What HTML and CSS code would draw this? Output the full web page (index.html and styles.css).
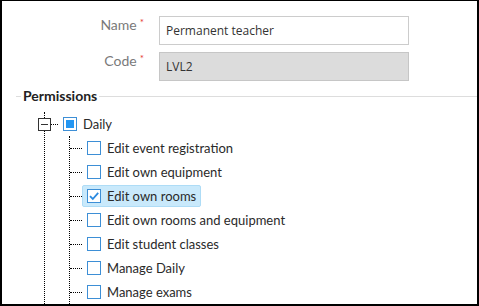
FILE: index.html
```html
<!DOCTYPE html>
<html lang="en">
<head>
    <meta charset="UTF-8">
    <meta name="viewport" content="width=device-width, initial-scale=1.0">
    <title>Edit Level</title>
    <link rel="stylesheet" href="styles.css">
</head>
<body>

<div class="frame">
    <div class="form-row">
        <label for="name">Name<span class="req">*</span></label>
        <input id="name" type="text" value="Permanent teacher">
    </div>
    <div class="form-row">
        <label for="code">Code<span class="req">*</span></label>
        <input id="code" type="text" class="readonly" value="LVL2" readonly>
    </div>

    <fieldset class="permissions">
        <legend>Permissions</legend>

        <ul class="tree">
            <li>
                <div class="row">
                    <span class="expander"></span>
                    <span class="hline root"></span>
                    <span class="item"><span class="check partial"></span>Daily</span>
                </div>
                <ul class="children">
                    <li><div class="row"><span class="hline"></span><span class="item"><span class="check"></span>Edit event registration</span></div></li>
                    <li><div class="row"><span class="hline"></span><span class="item"><span class="check"></span>Edit own equipment</span></div></li>
                    <li><div class="row"><span class="hline"></span><span class="item selected"><span class="check checked">
                        <svg width="12" height="12" viewBox="0 0 12 12"><path d="M2 6.2 L4.8 9 L10.2 2.8" fill="none" stroke="#2b8ae0" stroke-width="1.8"/></svg>
                    </span>Edit own rooms</span></div></li>
                    <li><div class="row"><span class="hline"></span><span class="item"><span class="check"></span>Edit own rooms and equipment</span></div></li>
                    <li><div class="row"><span class="hline"></span><span class="item"><span class="check"></span>Edit student classes</span></div></li>
                    <li><div class="row"><span class="hline"></span><span class="item"><span class="check"></span>Manage Daily</span></div></li>
                    <li><div class="row"><span class="hline"></span><span class="item"><span class="check"></span>Manage exams</span></div></li>
                </ul>
            </li>
        </ul>
    </fieldset>
</div>

</body>
</html>
```

FILE: styles.css
```css
html, body {
    margin: 0;
    padding: 0;
    background-color: #fff;
}
.frame {
    width: 479px;
    height: 306px;
    box-sizing: border-box;
    border-style: solid;
    border-color: #000;
    border-width: 1px 2px 2px 2px;
    padding-top: 15px;
    overflow: hidden;
    font-family: Lato, "Noto Sans", sans-serif;
    font-size: 13px;
    color: #333;
}
.form-row {
    display: flex;
    align-items: flex-start;
    margin-bottom: 7px;
}
.form-row label {
    width: 142px;
    text-align: right;
    color: #7a7a7a;
    font-size: 14px;
    line-height: 16px;
    padding-top: 1px;
}
.req {
    color: #e53935;
    font-size: 10px;
    vertical-align: top;
    margin-left: 3px;
    line-height: 10px;
}
.form-row input {
    margin-left: 15px;
    width: 250px;
    height: 29px;
    box-sizing: border-box;
    border: 1px solid #ccc;
    padding: 0 6px;
    font-family: "Open Sans", sans-serif;
    font-size: 12px;
    color: #333;
    background-color: #fff;
    outline: none;
}
.form-row input.readonly {
    background-color: #dcdcdc;
    border-color: #c6c6c6;
}

/* permissions tree */
.permissions {
    margin: 0 0 0 14px;
    padding: 8px 0 0 5px;
    border: none;
    border-top: 1px solid #ddd;
}
.permissions legend {
    padding: 0 2px;
    font-weight: bold;
    font-size: 14px;
    line-height: 16px;
    color: #222;
}
.tree, .children {
    list-style: none;
    margin: 0;
    padding: 0;
    border-left: 1px dotted #000;
}
.tree {
    margin-left: 23px;
}
.children {
    margin-left: 24px;
}
.row {
    display: flex;
    align-items: center;
    height: 24px;
}
.expander {
    width: 13px;
    height: 13px;
    box-sizing: border-box;
    margin-left: -7px;
    border: 1px solid #333;
    background-color: #fff;
    display: flex;
    align-items: center;
    justify-content: center;
}
.expander::before {
    content: "";
    width: 7px;
    height: 1px;
    background-color: #333;
}
.hline {
    width: 12px;
    height: 0;
    border-top: 1px dotted #000;
    margin-top: 1px;
}
.hline.root {
    width: 7px;
}
.item {
    display: flex;
    align-items: center;
    height: 22px;
    box-sizing: border-box;
    padding: 0 4px;
    border: 1px solid transparent;
    border-radius: 2px;
    color: #2a2a2a;
    white-space: nowrap;
}
.item.selected {
    background-color: #c9e9fb;
    border-color: #aedcf6;
}
.check {
    width: 14px;
    height: 14px;
    box-sizing: border-box;
    border: 1px solid #3d8fd6;
    background-color: #fff;
    margin-right: 6px;
    display: flex;
    align-items: center;
    justify-content: center;
}
.check.partial::before {
    content: "";
    width: 8px;
    height: 8px;
    background-color: #2196f3;
}
```
